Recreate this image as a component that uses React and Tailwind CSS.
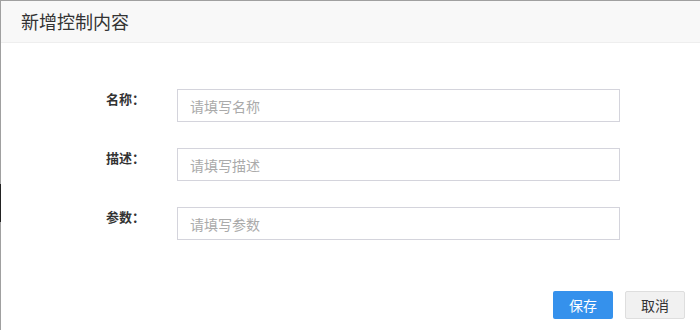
import { useState } from "react";

const fields = [
  { key: "name", label: "名称：", placeholder: "请填写名称" },
  { key: "desc", label: "描述：", placeholder: "请填写描述" },
  { key: "params", label: "参数：", placeholder: "请填写参数" },
];

export default function App() {
  const [form, setForm] = useState({ name: "", desc: "", params: "" });

  return (
    <div
      className="relative w-[700px] h-[330px] bg-white border-t border-l border-[#a0a0a0]"
      style={{ fontFamily: '"Noto Sans CJK SC", "Liberation Sans", sans-serif' }}
    >
      {/* left edge strip from the page behind */}
      <div className="absolute left-[-1px] top-[183px] w-px h-[38px] bg-[#222]" />

      {/* Header */}
      <div className="h-[42px] flex items-center pl-5 bg-[#f8f8f8] border-b border-[#eeeeee] text-[18px] text-[#333]">
        新增控制内容
      </div>

      {/* Form */}
      <div className="pt-[46px] flex flex-col gap-[26px]">
        {fields.map((f) => (
          <div key={f.key} className="flex items-start">
            <label className="w-[144px] text-right text-[13px] leading-[20px] font-bold text-[#333]">
              {f.label}
            </label>
            <input
              value={form[f.key]}
              onChange={(e) => setForm({ ...form, [f.key]: e.target.value })}
              placeholder={f.placeholder}
              className="ml-[32px] w-[443px] h-[33px] px-3 border border-[#d4d4dc] text-[14px] text-[#333] placeholder:text-[#aaa] outline-none"
            />
          </div>
        ))}
      </div>

      {/* Footer */}
      <div className="absolute right-[15px] top-[290px] flex gap-3">
        <button className="w-[60px] h-[28px] rounded-[2px] bg-[#3591ec] text-white text-[14px]">
          保存
        </button>
        <button className="w-[60px] h-[28px] rounded-[2px] bg-[#f1f1f1] border border-[#dedede] text-[#333] text-[14px]">
          取消
        </button>
      </div>
    </div>
  );
}
